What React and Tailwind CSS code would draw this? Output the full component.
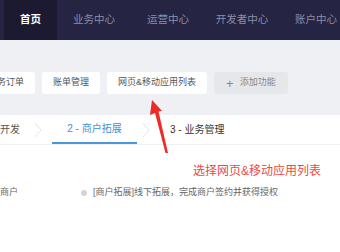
import React from 'react';

const navItems = ['首页', '业务中心', '运营中心', '开发者中心', '账户中心'];
const shortcuts = ['业务订单', '账单管理', '网页&移动应用列表'];

function Chevron() {
  return (
    <svg width="8" height="16" viewBox="0 0 8 16" className="shrink-0">
      <path d="M1 1 L7 8 L1 15" fill="none" stroke="#e4e6ea" strokeWidth="1" />
    </svg>
  );
}

export default function App() {
  return (
    <div
      className="relative w-[340px] h-[252px] overflow-hidden bg-white"
      style={{ fontFamily: '"Liberation Sans", "Noto Sans CJK SC", sans-serif' }}
    >
      {/* 顶部导航 */}
      <div className="h-[40px] bg-[#252442] flex items-stretch pl-[4px] whitespace-nowrap">
        {navItems.map((item, i) => (
          <div
            key={item}
            className={
              i === 0
                ? 'w-[53px] shrink-0 bg-[#1b1a30] text-white text-[10.5px] font-bold flex items-center justify-center'
                : 'w-[74px] shrink-0 text-[#8d8ea8] text-[10.5px] flex items-center justify-center'
            }
          >
            {item}
          </div>
        ))}
      </div>

      {/* 快捷入口 */}
      <div className="h-[75px] bg-[#eef0f4] pt-[32px] flex gap-[7px] ml-[-23px] pl-0 whitespace-nowrap">
        {shortcuts.map(s => (
          <div key={s} className="h-[22px] px-[11px] bg-white rounded-[3px] text-[9px] text-[#555] flex items-center shrink-0">
            {s}
          </div>
        ))}
        <div className="h-[22px] pl-[12px] pr-[12px] bg-[#e6e7ea] rounded-[3px] text-[9px] text-[#888] flex items-center gap-[6px] shrink-0">
          <span className="text-[13px] leading-none text-[#888] font-light">+</span>
          添加功能
        </div>
      </div>

      {/* 步骤标签 */}
      <div className="h-[30px] border-b border-[#eef0f3] flex items-stretch whitespace-nowrap text-[10px]">
        <div className="w-[20px] flex items-center text-[#555]">开发</div>
        <div className="w-[32px] flex items-center justify-center pl-[4px]"><Chevron /></div>
        <div className="w-[85px] flex items-center justify-center text-[#3f8fd9] border-b-2 border-[#4a98dc]">2 - 商户拓展</div>
        <div className="w-[18px] flex items-center justify-center"><Chevron /></div>
        <div className="pl-[15px] flex items-center text-[#333]">3 - 业务管理</div>
      </div>

      {/* 说明 */}
      <div className="pt-[18px] pl-[193px] text-[12px] leading-[16px] text-[#ea4a45] whitespace-nowrap">
        选择网页&移动应用列表
      </div>

      <div className="mt-[7px] h-[14px] flex items-center text-[9px] text-[#666] whitespace-nowrap">
        <div className="w-[81px]">商户</div>
        <span className="w-[6px] h-[6px] rounded-full bg-[#d3d4d7] mr-[6px]"></span>
        <div>[商户拓展]线下拓展，完成商户签约并获得授权</div>
      </div>

      {/* 红色箭头 */}
      <svg className="absolute left-0 top-0 pointer-events-none" width="340" height="252">
        <polygon
          points="152,100 162,111 158.5,111.5 168,153 165.5,153 155,113 150,115"
          fill="#ee2b24"
        />
      </svg>
    </div>
  );
}
